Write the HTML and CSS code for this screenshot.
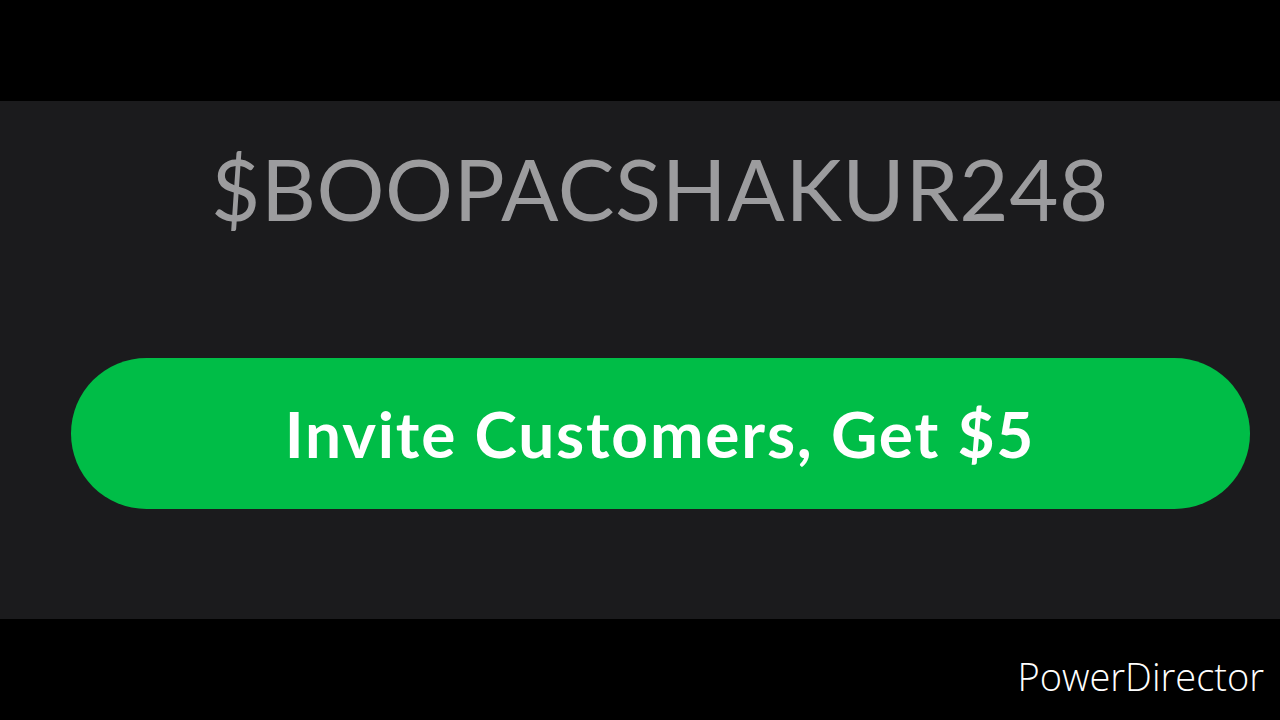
FILE: index.html
```html
<!DOCTYPE html>
<html lang="en">
<head>
  <meta charset="UTF-8">
  <title>Invite Customers</title>
  <link rel="stylesheet" href="styles.css">
</head>
<body>
  <div class="top-bar"></div>

  <div class="panel">
    <div class="cashtag">$BOOPACSHAKUR248</div>
    <button class="invite-btn">Invite Customers, Get $5</button>
  </div>

  <footer class="bottom-bar">
    <span class="watermark">PowerDirector</span>
  </footer>
</body>
</html>
```

FILE: styles.css
```css
body {
  margin: 0;
  padding: 0;
  background-color: #000;
  font-family: Lato, "Open Sans", sans-serif;
  width: 1280px;
  height: 720px;
  overflow: hidden;
}
.top-bar {
  height: 101px;
  background-color: #000;
}
.panel {
  height: 518px;
  box-sizing: border-box;
  background-color: #1b1b1d;
  display: flex;
  flex-direction: column;
  align-items: center;
  padding-top: 37px;
  padding-left: 40px;
}
.cashtag {
  color: #9c9c9e;
  font-size: 85px;
  line-height: 100px;
  font-weight: 400;
  letter-spacing: 0.6px;
}
.invite-btn {
  margin-top: 120px;
  width: 1179px;
  height: 151px;
  border: none;
  border-radius: 76px;
  background-color: #00bd47;
  color: #fff;
  font-family: Lato, "Open Sans", sans-serif;
  font-size: 64px;
  font-weight: 700;
  letter-spacing: 1.8px;
  padding: 0;
}
.bottom-bar {
  height: 101px;
  display: flex;
  justify-content: flex-end;
  align-items: center;
  padding-right: 16px;
}
.watermark {
  color: #fff;
  font-family: "Open Sans", sans-serif;
  font-weight: 300;
  font-size: 38px;
  margin-top: 12px;
}
```
